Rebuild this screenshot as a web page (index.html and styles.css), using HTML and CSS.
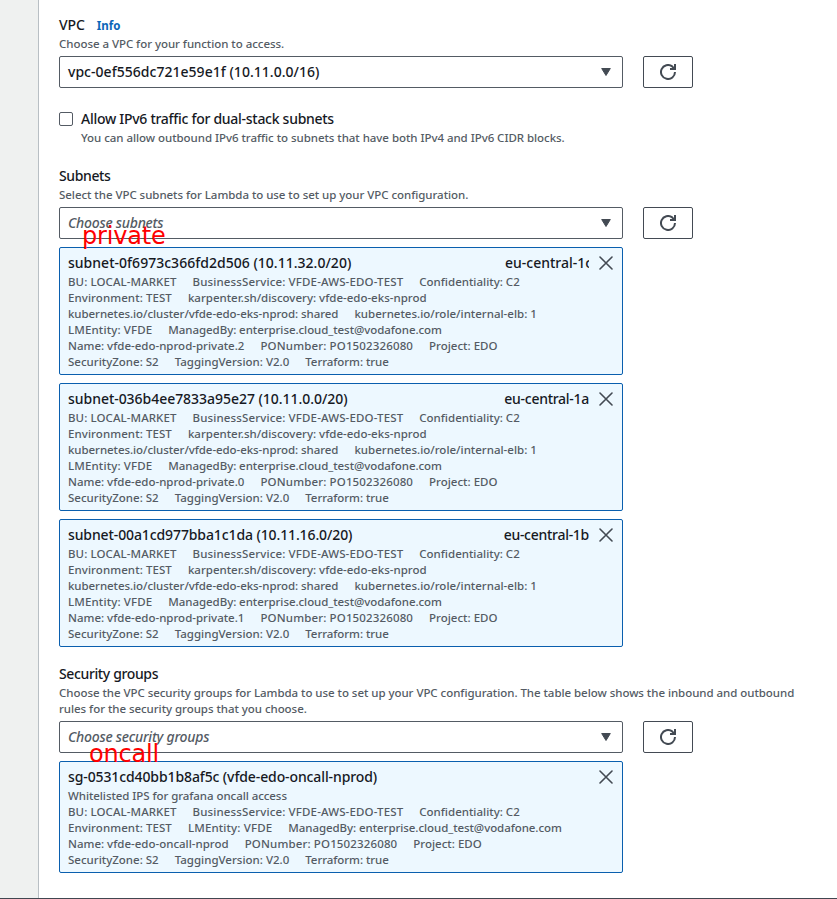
FILE: index.html
```html
<!DOCTYPE html>
<html lang="en">
<head>
<meta charset="utf-8">
<title>VPC configuration</title>
<link rel="stylesheet" href="styles.css">
</head>
<body>
<svg class="defs" width="0" height="0">
  <symbol id="refresh" viewBox="0 0 16 16"><path d="M15 8a7 7 0 1 1-2.8-5.6L14.5 5M15 0v5h-5" fill="none" stroke="currentColor" stroke-width="2"/></symbol>
  <symbol id="caret" viewBox="0 0 10 8"><path d="M.7.5h8.6L5 7.5z" fill="currentColor" stroke="currentColor" stroke-linejoin="round"/></symbol>
  <symbol id="close" viewBox="0 0 14 14"><path d="M1 1l12 12M13 1L1 13" fill="none" stroke="currentColor" stroke-width="1.6" stroke-linecap="round"/></symbol>
</svg>
<div class="page">
  <aside class="rail"></aside>
  <main class="panel">
    <section class="field">
      <h2 class="label"><span class="vpc">VPC</span><a class="info">Info</a></h2>
      <p class="hint">Choose a VPC for your function to access.</p>
      <div class="control">
        <div class="select"><span class="value">vpc-0ef556dc721e59e1f (10.11.0.0/16)</span><svg class="caret"><use href="#caret"/></svg></div>
        <button class="refresh"><svg><use href="#refresh"/></svg></button>
      </div>
    </section>
    <section class="field check">
      <span class="box"></span>
      <div>
        <h2 class="label allow">Allow IPv6 traffic for dual-stack subnets</h2>
        <p class="hint">You can allow outbound IPv6 traffic to subnets that have both IPv4 and IPv6 CIDR blocks.</p>
      </div>
    </section>
    <section class="field subnets">
      <h2 class="label">Subnets</h2>
      <p class="hint">Select the VPC subnets for Lambda to use to set up your VPC configuration.</p>
      <div class="control">
        <div class="select"><span class="placeholder">Choose subnets</span><svg class="caret"><use href="#caret"/></svg><span class="note note-private">private</span></div>
        <button class="refresh"><svg><use href="#refresh"/></svg></button>
      </div>
      <article class="token">
        <h3 class="title"><span class="name loose">subnet-0f6973c366fd2d506 (10.11.32.0/20)</span><span class="zone clipped">eu-central-1c</span></h3>
        <svg class="close"><use href="#close"/></svg>
        <div class="tags"><span class="semi">BU: LOCAL-MARKET</span><span class="wide">BusinessService: VFDE-AWS-EDO-TEST</span><span>Confidentiality: C2</span></div>
        <div class="tags"><span class="semi">Environment: TEST</span><span>karpenter.sh/discovery: vfde-edo-eks-nprod</span></div>
        <div class="tags"><span class="dense">kubernetes.io/cluster/vfde-edo-eks-nprod: shared</span><span>kubernetes.io/role/internal-elb: 1</span></div>
        <div class="tags"><span class="wide">LMEntity: VFDE</span><span class="dense">ManagedBy: enterprise.cloud_test@vodafone.com</span></div>
        <div class="tags"><span>Name: vfde-edo-nprod-private.2</span><span class="wide">PONumber: PO1502326080</span><span>Project: EDO</span></div>
        <div class="tags"><span>SecurityZone: S2</span><span>TaggingVersion: V2.0</span><span class="dense">Terraform: true</span></div>
      </article>
      <article class="token">
        <h3 class="title"><span class="name">subnet-036b4ee7833a95e27 (10.11.0.0/20)</span><span class="zone">eu-central-1a</span></h3>
        <svg class="close"><use href="#close"/></svg>
        <div class="tags"><span class="semi">BU: LOCAL-MARKET</span><span class="wide">BusinessService: VFDE-AWS-EDO-TEST</span><span>Confidentiality: C2</span></div>
        <div class="tags"><span class="semi">Environment: TEST</span><span>karpenter.sh/discovery: vfde-edo-eks-nprod</span></div>
        <div class="tags"><span class="dense">kubernetes.io/cluster/vfde-edo-eks-nprod: shared</span><span>kubernetes.io/role/internal-elb: 1</span></div>
        <div class="tags"><span class="wide">LMEntity: VFDE</span><span class="dense">ManagedBy: enterprise.cloud_test@vodafone.com</span></div>
        <div class="tags"><span>Name: vfde-edo-nprod-private.0</span><span class="wide">PONumber: PO1502326080</span><span>Project: EDO</span></div>
        <div class="tags"><span>SecurityZone: S2</span><span>TaggingVersion: V2.0</span><span class="dense">Terraform: true</span></div>
      </article>
      <article class="token">
        <h3 class="title"><span class="name tight">subnet-00a1cd977bba1c1da (10.11.16.0/20)</span><span class="zone">eu-central-1b</span></h3>
        <svg class="close"><use href="#close"/></svg>
        <div class="tags"><span class="semi">BU: LOCAL-MARKET</span><span class="wide">BusinessService: VFDE-AWS-EDO-TEST</span><span>Confidentiality: C2</span></div>
        <div class="tags"><span class="semi">Environment: TEST</span><span>karpenter.sh/discovery: vfde-edo-eks-nprod</span></div>
        <div class="tags"><span class="dense">kubernetes.io/cluster/vfde-edo-eks-nprod: shared</span><span>kubernetes.io/role/internal-elb: 1</span></div>
        <div class="tags"><span class="wide">LMEntity: VFDE</span><span class="dense">ManagedBy: enterprise.cloud_test@vodafone.com</span></div>
        <div class="tags"><span>Name: vfde-edo-nprod-private.1</span><span class="wide">PONumber: PO1502326080</span><span>Project: EDO</span></div>
        <div class="tags"><span>SecurityZone: S2</span><span>TaggingVersion: V2.0</span><span class="dense">Terraform: true</span></div>
      </article>
    </section>
    <section class="field groups">
      <h2 class="label">Security groups</h2>
      <p class="hint">Choose the VPC security groups for Lambda to use to set up your VPC configuration. The table below shows the inbound and outbound<br>rules for the security groups that you choose.</p>
      <div class="control">
        <div class="select"><span class="placeholder">Choose security groups</span><svg class="caret"><use href="#caret"/></svg><span class="note note-oncall">oncall</span></div>
        <button class="refresh"><svg><use href="#refresh"/></svg></button>
      </div>
      <article class="token">
        <h3 class="title"><span class="name tight">sg-0531cd40bb1b8af5c (vfde-edo-oncall-nprod)</span></h3>
        <svg class="close"><use href="#close"/></svg>
        <div class="tags"><span class="dense">Whitelisted IPS for grafana oncall access</span></div>
        <div class="tags"><span class="semi">BU: LOCAL-MARKET</span><span class="wide">BusinessService: VFDE-AWS-EDO-TEST</span><span>Confidentiality: C2</span></div>
        <div class="tags"><span class="semi">Environment: TEST</span><span class="wide">LMEntity: VFDE</span><span class="dense">ManagedBy: enterprise.cloud_test@vodafone.com</span></div>
        <div class="tags"><span>Name: vfde-edo-oncall-nprod</span><span class="wide">PONumber: PO1502326080</span><span>Project: EDO</span></div>
        <div class="tags"><span>SecurityZone: S2</span><span>TaggingVersion: V2.0</span><span class="dense">Terraform: true</span></div>
      </article>
    </section>
  </main>
</div>
</body>
</html>
```
FILE: styles.css
```css
* { box-sizing: border-box; }
body { margin: 0; background: #fff; color: #16191f; font: 500 14px/22px "Noto Sans", "Open Sans", sans-serif; }
h2, h3, p { margin: 0; font-size: inherit; font-weight: 500; }
.defs { position: absolute; }
.page { display: flex; height: 899px; overflow: hidden; border-bottom: 1px solid #414750; }
.rail { flex: none; width: 39px; background: #eff1f0; border-right: 1px solid #b8bfc4; }
.panel { flex: 1; padding: 14px 20px 0; }
.field { margin-bottom: 20px; white-space: nowrap; }
.label { display: flex; align-items: baseline; height: 22px; letter-spacing: -0.37px; }
.label.allow { letter-spacing: -0.28px; }
.vpc { letter-spacing: -0.1px; }
.info { margin-left: 12px; color: #0a66b8; font-size: 11.5px; font-weight: 700; letter-spacing: 0; }
.hint { color: #545b64; font-size: 11.5px; line-height: 16px; letter-spacing: -0.045px; }
.control { display: flex; gap: 20px; margin-top: 4px; }
.select { position: relative; display: flex; align-items: center; justify-content: space-between; width: 564px; height: 32px; padding: 0 11px 0 8px; border: 1px solid #545b64; border-radius: 2px; letter-spacing: 0.03px; }
.placeholder { color: #545b64; font-style: italic; letter-spacing: -0.25px; }
.caret { width: 10px; height: 8px; color: #434a53; }
.refresh { display: flex; align-items: center; justify-content: center; width: 50px; height: 32px; padding: 0; border: 1px solid #434a53; border-radius: 2px; background: #fff; color: #434a53; }
.refresh svg { width: 16px; height: 16px; }
.check { display: flex; gap: 8px; margin-bottom: 19px; }
.subnets { margin-bottom: 16px; }
.box { width: 14px; height: 14px; margin-top: 4px; border: 1px solid #545b64; border-radius: 2px; }
.token { position: relative; width: 564px; margin-top: 8px; padding: 4px 33px 4px 8px; border: 1px solid #0a5fae; border-radius: 2px; background: #edf8ff; }
.title { display: flex; justify-content: space-between; height: 22px; letter-spacing: -0.04px; }
.title .loose { letter-spacing: 0.02px; }
.title .tight { letter-spacing: -0.11px; }
.zone { letter-spacing: -0.28px; }
.zone.clipped { width: 84px; overflow: hidden; letter-spacing: 0; }
.close { position: absolute; top: 8px; right: 9px; width: 14px; height: 14px; color: #434a53; }
.tags { display: flex; gap: 16px; height: 16px; color: #545b64; font-size: 11.5px; line-height: 16px; letter-spacing: 0; }
.tags .wide { letter-spacing: 0.14px; }
.tags .semi { letter-spacing: 0.08px; }
.tags .dense { letter-spacing: -0.065px; }
.note { position: absolute; z-index: 2; color: #f00; font: 24px/28px "DejaVu Sans", sans-serif; letter-spacing: -0.2px; }
.note-private { left: 22px; top: 14px; }
.note-oncall { left: 29px; top: 18px; }
```
